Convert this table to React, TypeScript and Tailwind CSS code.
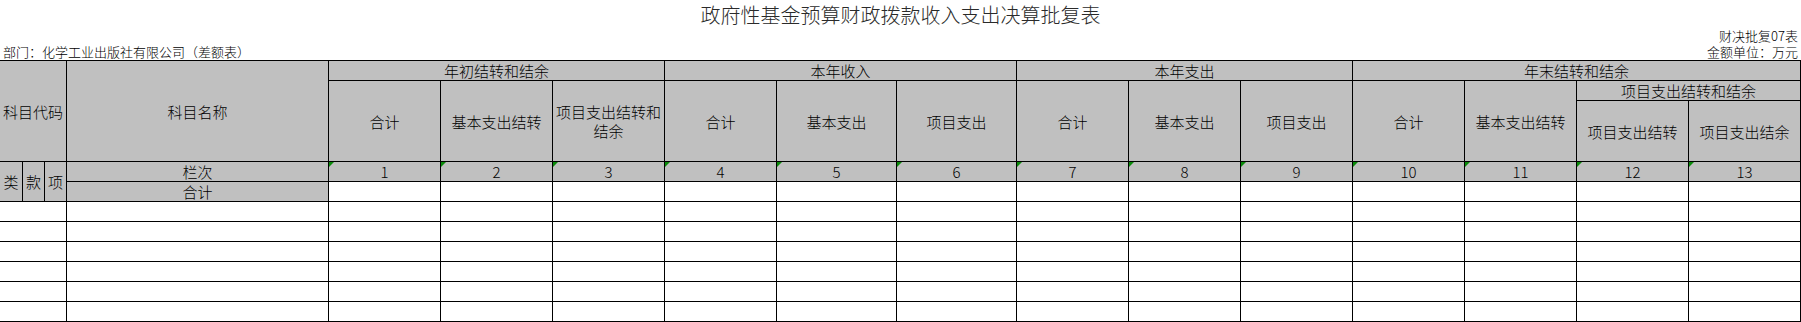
import type { ReactNode } from "react";

type CellProps = {
  className?: string;
  children?: ReactNode;
  white?: boolean;
  mark?: boolean;
};

const Cell = ({ className = "", children, white, mark }: CellProps) => {
  return (
    <div
      className={`relative flex items-center justify-center border-r border-b border-black px-[2px] text-center leading-[19px] ${
        white ? "bg-white" : "bg-[#c0c0c0]"
      } ${className}`}
    >
      {mark && (
        <span className="absolute left-0 top-0 h-0 w-0 border-t-[5px] border-r-[5px] border-t-[#0a8a0a] border-r-transparent" />
      )}
      {children}
    </div>
  );
};

const numCols = [
  "col-start-5",
  "col-start-6",
  "col-start-7",
  "col-start-8",
  "col-start-9",
  "col-start-10",
  "col-start-11",
  "col-start-12",
  "col-start-13",
  "col-start-14",
  "col-start-15",
  "col-start-16",
  "col-start-17",
];

const App = () => {
  const font = "font-['Noto_Sans_CJK_SC','Noto_Sans',sans-serif]";

  return (
    <div className={`w-[1801px] h-[322px] overflow-hidden bg-white text-black font-light ${font}`}>
      {/* title block */}
      <div className="h-[28px] flex items-center justify-center text-[20px] leading-[28px] text-[#2a2a2a] pt-[2px]">
        政府性基金预算财政拨款收入支出决算批复表
      </div>
      <div className="h-[16px] flex items-center justify-end pr-[3px] text-[13px] leading-[16px]">
        财决批复07表
      </div>
      <div className="h-[16px] flex items-center justify-between px-[3px] text-[13px] leading-[16px]">
        <span>部门：化学工业出版社有限公司（差额表）</span>
        <span>金额单位：万元</span>
      </div>

      {/* table */}
      <div className="grid grid-cols-[23px_22px_22px_262px_112px_112px_112px_112px_120px_120px_112px_112px_112px_112px_112px_112px_112px] grid-rows-[20px_20px_61px_20px_20px] auto-rows-[20px] border-t border-black text-[15px]">
        <Cell className="col-start-1 col-span-3 row-start-1 row-span-3">科目代码</Cell>
        <Cell className="col-start-4 row-start-1 row-span-3">科目名称</Cell>

        <Cell className="col-start-5 col-span-3 row-start-1">年初结转和结余</Cell>
        <Cell className="col-start-5 row-start-2 row-span-2">合计</Cell>
        <Cell className="col-start-6 row-start-2 row-span-2">基本支出结转</Cell>
        <Cell className="col-start-7 row-start-2 row-span-2">项目支出结转和结余</Cell>

        <Cell className="col-start-8 col-span-3 row-start-1">本年收入</Cell>
        <Cell className="col-start-8 row-start-2 row-span-2">合计</Cell>
        <Cell className="col-start-9 row-start-2 row-span-2">基本支出</Cell>
        <Cell className="col-start-10 row-start-2 row-span-2">项目支出</Cell>

        <Cell className="col-start-11 col-span-3 row-start-1">本年支出</Cell>
        <Cell className="col-start-11 row-start-2 row-span-2">合计</Cell>
        <Cell className="col-start-12 row-start-2 row-span-2">基本支出</Cell>
        <Cell className="col-start-13 row-start-2 row-span-2">项目支出</Cell>

        <Cell className="col-start-14 col-span-4 row-start-1">年末结转和结余</Cell>
        <Cell className="col-start-14 row-start-2 row-span-2">合计</Cell>
        <Cell className="col-start-15 row-start-2 row-span-2">基本支出结转</Cell>
        <Cell className="col-start-16 col-span-2 row-start-2">项目支出结转和结余</Cell>
        <Cell className="col-start-16 row-start-3">项目支出结转</Cell>
        <Cell className="col-start-17 row-start-3">项目支出结余</Cell>

        <Cell className="col-start-1 row-start-4 row-span-2">类</Cell>
        <Cell className="col-start-2 row-start-4 row-span-2">款</Cell>
        <Cell className="col-start-3 row-start-4 row-span-2">项</Cell>
        <Cell className="col-start-4 row-start-4">栏次</Cell>
        {numCols.map((c, i) => (
          <Cell key={c} className={`${c} row-start-4`} mark>
            {i + 1}
          </Cell>
        ))}
        <Cell className="col-start-4 row-start-5">合计</Cell>
        {numCols.map((c) => (
          <Cell key={`t-${c}`} className={`${c} row-start-5`} white />
        ))}

        {[0, 1, 2, 3, 4, 5].map((r) => (
          <div key={r} className="contents">
            <Cell className="col-span-3" white />
            <Cell white />
            {numCols.map((c) => (
              <Cell key={`${r}-${c}`} white />
            ))}
          </div>
        ))}
      </div>
    </div>
  );
};

export default App;
